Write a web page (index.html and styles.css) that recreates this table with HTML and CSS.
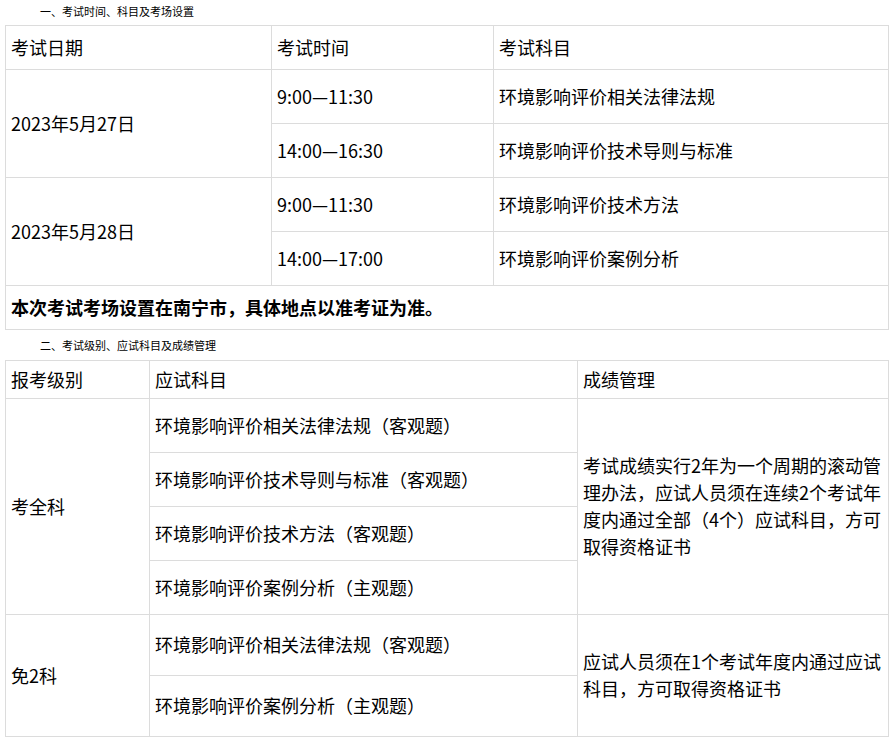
FILE: index.html
```html
<!DOCTYPE html>
<html lang="zh-CN">
<head>
<meta charset="utf-8">
<title>考试安排</title>
<link rel="stylesheet" href="styles.css">
</head>
<body>
<div class="page">
  <p class="heading heading-first">一、考试时间、科目及考场设置</p>
  <table class="grid grid-one">
    <colgroup><col class="c1"><col class="c2"><col class="c3"></colgroup>
    <tr class="h44"><td>考试日期</td><td>考试时间</td><td>考试科目</td></tr>
    <tr class="h54"><td rowspan="2">2023年5月27日</td><td>9:00—11:30</td><td>环境影响评价相关法律法规</td></tr>
    <tr class="h54"><td>14:00—16:30</td><td>环境影响评价技术导则与标准</td></tr>
    <tr class="h54"><td rowspan="2">2023年5月28日</td><td>9:00—11:30</td><td>环境影响评价技术方法</td></tr>
    <tr class="h54"><td>14:00—17:00</td><td>环境影响评价案例分析</td></tr>
    <tr class="h44"><td colspan="3" class="bold">本次考试考场设置在南宁市，具体地点以准考证为准。</td></tr>
  </table>
  <p class="heading heading-second">二、考试级别、应试科目及成绩管理</p>
  <table class="grid grid-two">
    <colgroup><col class="d1"><col class="d2"><col class="d3"></colgroup>
    <tr class="h38"><td>报考级别</td><td>应试科目</td><td>成绩管理</td></tr>
    <tr class="h54"><td rowspan="4">考全科</td><td>环境影响评价相关法律法规（客观题）</td><td rowspan="4" class="wrap">考试成绩实行2年为一个周期的滚动管理办法，应试人员须在连续2个考试年度内通过全部（4个）应试科目，方可取得资格证书</td></tr>
    <tr class="h54"><td>环境影响评价技术导则与标准（客观题）</td></tr>
    <tr class="h54"><td>环境影响评价技术方法（客观题）</td></tr>
    <tr class="h54"><td>环境影响评价案例分析（主观题）</td></tr>
    <tr class="h61"><td rowspan="2">免2科</td><td>环境影响评价相关法律法规（客观题）</td><td rowspan="2" class="wrap">应试人员须在1个考试年度内通过应试科目，方可取得资格证书</td></tr>
    <tr class="h61"><td>环境影响评价案例分析（主观题）</td></tr>
  </table>
</div>
</body>
</html>
```

FILE: styles.css
```css
html, body {
  margin: 0;
  padding: 0;
  background: #fff;
}
body {
  font-family: "Noto Sans CJK SC", "Noto Sans", sans-serif;
  color: #000;
}
.page {
  padding: 0 5px;
}
.heading {
  margin: 0;
  padding-left: 35px;
  font-size: 11px;
  color: #000;
}
.heading-first {
  height: 25px;
  line-height: 22px;
}
.heading-second {
  height: 30px;
  line-height: 30px;
}
.grid {
  width: 883px;
  border-collapse: collapse;
  table-layout: fixed;
  font-size: 18px;
}
.grid td {
  border: 1px solid #dcdcdc;
  padding: 0 6px 1px 5px;
  vertical-align: middle;
  line-height: 27px;
}
.c1 { width: 266px; }
.c2 { width: 222px; }
.c3 { width: 395px; }
.d1 { width: 144px; }
.d2 { width: 428px; }
.d3 { width: 311px; }
.h38 { height: 38px; }
.h44 { height: 44px; }
.h54 { height: 54px; }
.h61 { height: 61px; }
.bold { font-weight: bold; }
.wrap { word-break: break-all; }
```
